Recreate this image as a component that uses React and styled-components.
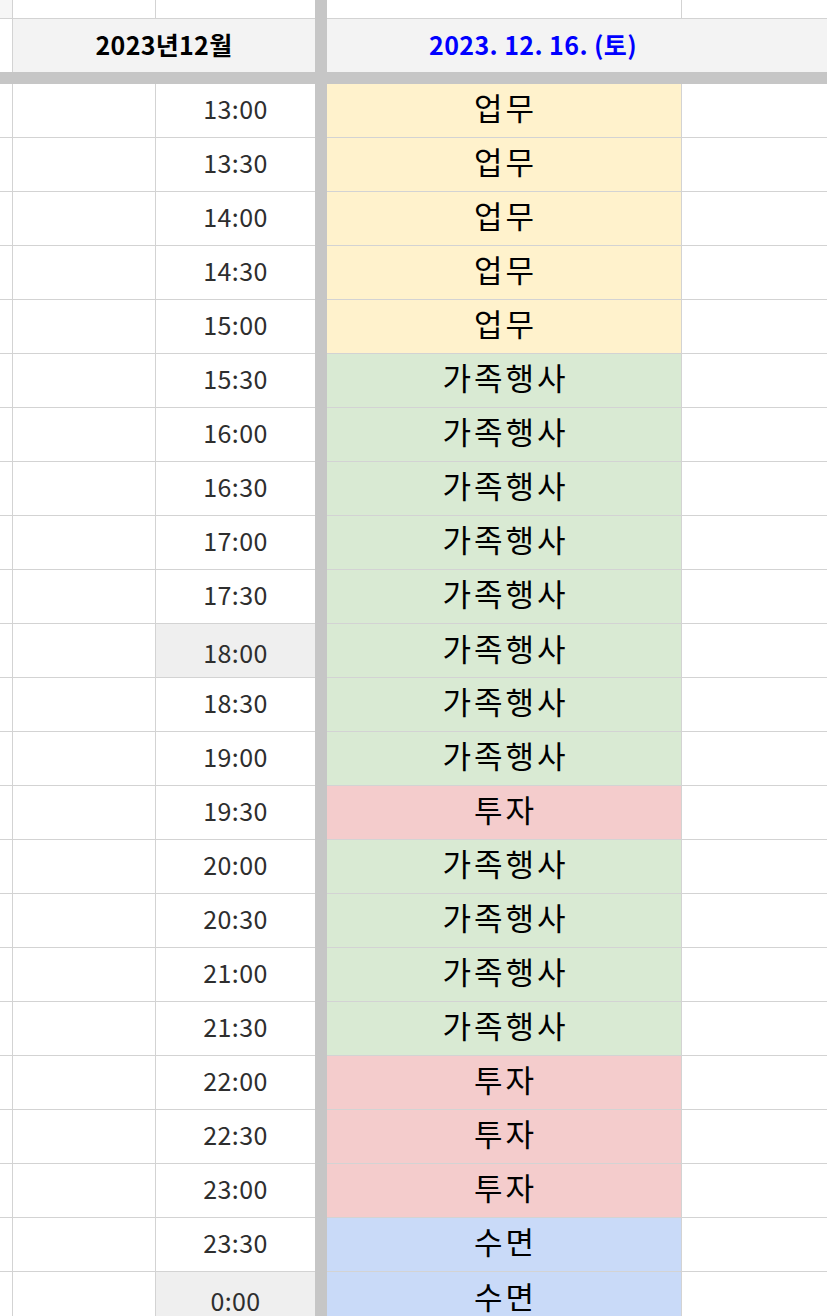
import React from 'react';
import styled, { createGlobalStyle } from 'styled-components';

const GlobalStyle = createGlobalStyle`
  html, body { margin: 0; padding: 0; background: #ffffff; }
  body { font-family: "Noto Sans CJK KR", "Noto Sans", sans-serif; overflow: hidden; }
`;

const COLORS = {
  work: '#fff2cc',
  family: '#d9ead3',
  invest: '#f4cccc',
  sleep: '#c9daf8',
};

const schedule = [
  ['13:00', '업무', 'work'],
  ['13:30', '업무', 'work'],
  ['14:00', '업무', 'work'],
  ['14:30', '업무', 'work'],
  ['15:00', '업무', 'work'],
  ['15:30', '가족행사', 'family'],
  ['16:00', '가족행사', 'family'],
  ['16:30', '가족행사', 'family'],
  ['17:00', '가족행사', 'family'],
  ['17:30', '가족행사', 'family'],
  ['18:00', '가족행사', 'family', true],
  ['18:30', '가족행사', 'family'],
  ['19:00', '가족행사', 'family'],
  ['19:30', '투자', 'invest'],
  ['20:00', '가족행사', 'family'],
  ['20:30', '가족행사', 'family'],
  ['21:00', '가족행사', 'family'],
  ['21:30', '가족행사', 'family'],
  ['22:00', '투자', 'invest'],
  ['22:30', '투자', 'invest'],
  ['23:00', '투자', 'invest'],
  ['23:30', '수면', 'sleep'],
  ['0:00', '수면', 'sleep', true],
];

const Sheet = styled.div`
  width: 827px;
  height: 1316px;
  overflow: hidden;
  display: flex;
  flex-direction: column;
`;

const Row = styled.div`
  display: flex;
  flex: none;
  height: ${p => p.h}px;
`;

const Cell = styled.div`
  box-sizing: border-box;
  flex: ${p => (p.grow ? '1 1 auto' : 'none')};
  width: ${p => (p.w ? `${p.w}px` : 'auto')};
  background: ${p => p.bg || '#ffffff'};
  border-right: ${p => (p.noRight ? 'none' : '1px solid #d3d3d3')};
  border-bottom: ${p => (p.noBottom ? 'none' : '1px solid #d3d3d3')};
  display: flex;
  align-items: center;
  justify-content: center;
  padding-top: ${p => p.pt || 0}px;
`;

const Freeze = styled.div`
  flex: none;
  width: 12px;
  background: #c6c6c6;
`;

const FreezeBand = styled.div`
  flex: none;
  height: 12px;
  background: #c6c6c6;
`;

const MonthTitle = styled.span`
  font-size: 25px;
  line-height: 1;
  font-weight: 700;
  letter-spacing: 0.3px;
  color: #000000;
  margin-top: -2px;
`;

const DateTitle = styled.span`
  font-size: 25px;
  line-height: 1;
  font-weight: 700;
  letter-spacing: 0.4px;
  color: #0000ff;
  margin-top: -2px;
`;

const DateCell = styled(Cell)`
  justify-content: flex-start;
  padding-left: 102px;
`;

const Time = styled.span`
  font-size: 25px;
  line-height: 1;
  letter-spacing: 0.4px;
  color: #2e2e2e;
  margin-top: -5px;
`;

const Task = styled.span`
  font-size: 31px;
  line-height: 1;
  letter-spacing: 3px;
  margin-right: -3px;
  color: #000000;
  margin-top: -9px;
`;

export default function App() {
  return (
    <>
      <GlobalStyle />
      <Sheet>
        <Row h={19}>
          <Cell w={13} bg="#f6f6f6" />
          <Cell w={143} />
          <Cell w={159} noRight />
          <Freeze />
          <Cell w={355} />
          <Cell grow noRight />
        </Row>
        <Row h={53}>
          <Cell w={13} noBottom />
          <Cell w={302} bg="#f3f3f3" noRight noBottom>
            <MonthTitle>2023년12월</MonthTitle>
          </Cell>
          <Freeze />
          <DateCell grow bg="#f3f3f3" noRight noBottom>
            <DateTitle>2023. 12. 16. (토)</DateTitle>
          </DateCell>
        </Row>
        <FreezeBand />
        {schedule.map(([time, task, kind, marked]) => (
          <Row h={54} key={time}>
            <Cell w={13} />
            <Cell w={143} />
            <Cell w={159} noRight bg={marked ? '#efefef' : '#ffffff'} pt={marked ? 8 : 0}>
              <Time>{time}</Time>
            </Cell>
            <Freeze />
            <Cell w={355} bg={COLORS[kind]} pt={marked ? 3 : 0}>
              <Task>{task}</Task>
            </Cell>
            <Cell grow noRight />
          </Row>
        ))}
      </Sheet>
    </>
  );
}
